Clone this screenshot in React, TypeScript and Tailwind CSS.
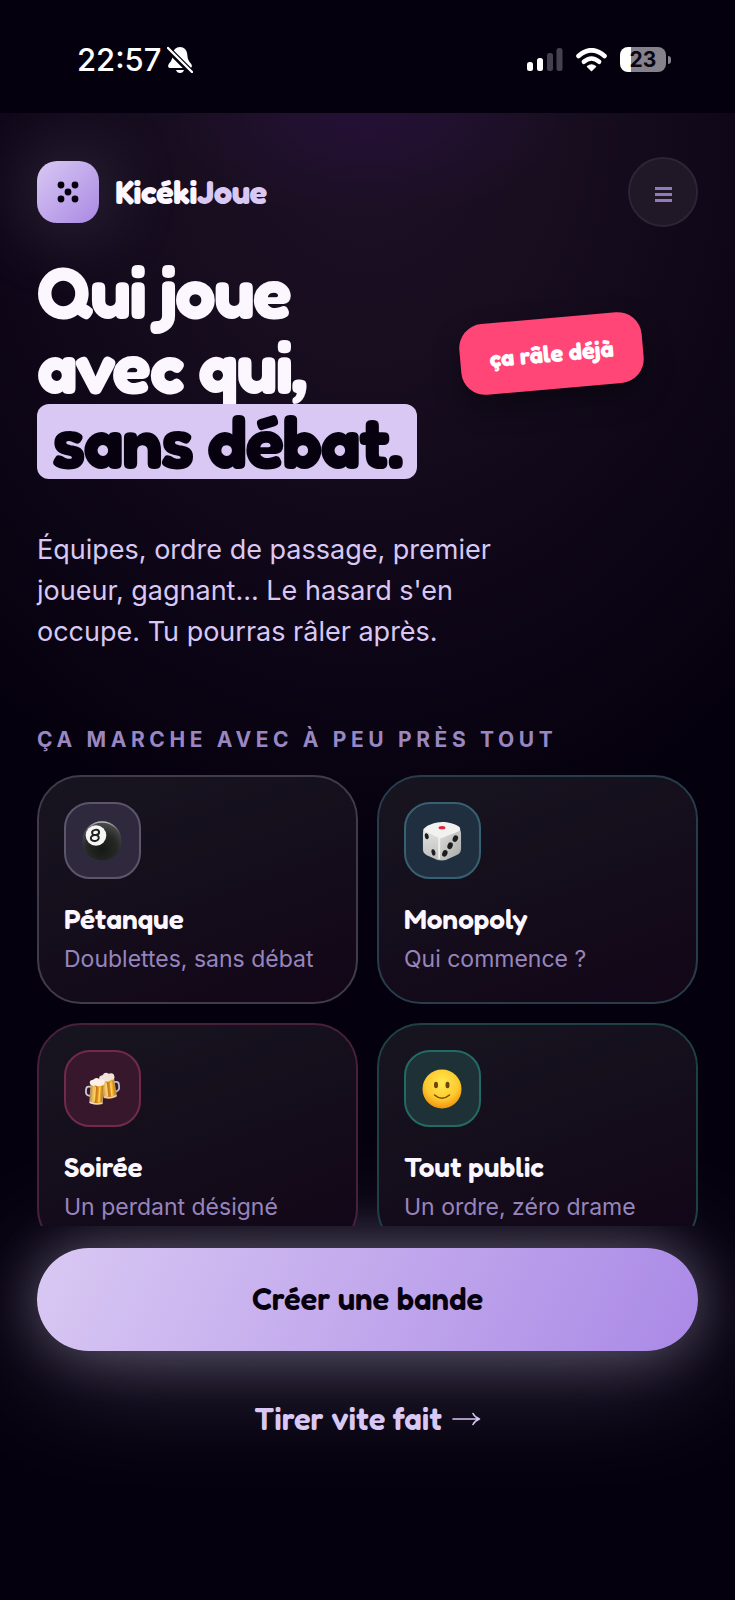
import { useState } from 'react';
import type { ReactNode } from 'react';
import clsx from 'clsx';

type Univers = {
    id: string;
    titre: string;
    detail: string;
    icone: ReactNode;
    carte: string;
    pastille: string;
};

const DISPLAY = "font-['Fredoka','Lato',sans-serif]";

const BilleIcon = () => (
    <svg viewBox="0 0 40 40" className="w-10 h-10" aria-hidden="true">
        <defs>
            <radialGradient id="bille" cx="0.5" cy="0.7" r="0.65">
                <stop offset="0" stopColor="#161816" />
                <stop offset="0.6" stopColor="#262826" />
                <stop offset="1" stopColor="#4a4b4c" />
            </radialGradient>
            <linearGradient id="reflet" x1="0" y1="0" x2="0" y2="1">
                <stop offset="0" stopColor="#b8b8bf" />
                <stop offset="0.4" stopColor="#45464a" stopOpacity="0" />
            </linearGradient>
        </defs>
        <circle cx="20" cy="20" r="19.5" fill="url(#bille)" />
        <circle cx="20" cy="20" r="19" fill="none" stroke="url(#reflet)" strokeWidth="1.4" />
        <circle cx="14" cy="14.5" r="10.3" fill="#f5f5f5" />
        <ellipse cx="13.6" cy="11.4" rx="3.5" ry="2.6" fill="none" stroke="#222" strokeWidth="2" transform="rotate(-12 13.6 11.4)" />
        <ellipse cx="12.8" cy="17" rx="4" ry="3" fill="none" stroke="#222" strokeWidth="2" transform="rotate(-12 12.8 17)" />
    </svg>
);

const DeIcon = () => (
    <svg viewBox="0 0 42 42" className="w-10 h-10" aria-hidden="true">
        <defs>
            <linearGradient id="deGauche" x1="0" y1="0" x2="0" y2="1">
                <stop offset="0" stopColor="#e4e4e3" />
                <stop offset="1" stopColor="#bebebc" />
            </linearGradient>
            <linearGradient id="deDroite" x1="0" y1="0" x2="1" y2="1">
                <stop offset="0" stopColor="#dededc" />
                <stop offset="1" stopColor="#a9a9a7" />
            </linearGradient>
        </defs>
        <path d="M2 8Q1 10 1 14v15c0 4 1 5 4 7l9 4q3 2 6 1V16Z" fill="url(#deGauche)" />
        <path d="M40 9q1 2 1 5v15c0 4-2 6-5 7l-11 5q-4 1-7 0V17Z" fill="url(#deDroite)" />
        <path d="M3 7c3-3 12-6 18-6s14 2 18 5c2 2 1 4-1 5l-15 6q-4 2-7 0L4 11C1 10 1 9 3 7Z" fill="#f1f1f0" />
        <path d="M18 18v21" stroke="#eeeeed" strokeWidth="2" strokeLinecap="round" />
        <ellipse cx="21" cy="7" rx="3.6" ry="1.7" fill="#e3203f" />
        <g fill="#1d1d1f">
            <ellipse cx="5" cy="16" rx="2" ry="3.2" transform="rotate(-12 5 16)" />
            <ellipse cx="12" cy="33" rx="2" ry="3.4" transform="rotate(-12 12 33)" />
            <ellipse cx="35" cy="18.5" rx="2.7" ry="3.6" transform="rotate(22 35 18.5)" />
            <ellipse cx="29.5" cy="26" rx="2.7" ry="3.6" transform="rotate(22 29.5 26)" />
            <ellipse cx="24" cy="34" rx="2.7" ry="3.6" transform="rotate(22 24 34)" />
        </g>
    </svg>
);

const ChopesIcon = () => (
    <svg viewBox="0 0 40 40" className="w-9 h-9" aria-hidden="true">
        <defs>
            <linearGradient id="biere" x1="0" y1="0" x2="1" y2="0">
                <stop offset="0" stopColor="#c18a3e" />
                <stop offset="0.25" stopColor="#f2c76a" />
                <stop offset="0.45" stopColor="#c9741a" />
                <stop offset="0.75" stopColor="#f6b521" />
                <stop offset="1" stopColor="#a96d24" />
            </linearGradient>
        </defs>
        <g transform="rotate(-6 28 18)">
            <path d="M33 13h3q3 0 3 3v3q0 4-5 5" fill="none" stroke="#b9bcc6" strokeWidth="2" />
            <path d="M20 9h14l1 20q-7 3-14 0Z" fill="url(#biere)" stroke="#cfa878" strokeWidth="0.8" />
            <path d="M25 13v15M30 13v15" stroke="#fbd56a" strokeWidth="1.5" />
            <path d="M21 28q7 3 14 0" stroke="#ddd2cc" strokeWidth="1.5" fill="none" />
            <path d="M18 9q-1-5 4-5 3-4 7-1 6-1 6 4 0 4-4 3-3 3-6 1-5 2-7-2Z" fill="#f0e4da" />
        </g>
        <g transform="rotate(4 14 26)">
            <path d="M8 18H5q-3 0-3 3v3q0 4 5 4" fill="none" stroke="#c7cad2" strokeWidth="2" />
            <path d="M7 14h14v22q-7 2-14 0Z" fill="url(#biere)" stroke="#cfa878" strokeWidth="0.8" />
            <path d="M12 18v16M17 18v16" stroke="#ffd45e" strokeWidth="1.5" />
            <path d="M7 35q7 3 14 0" stroke="#eadfda" strokeWidth="1.6" fill="none" />
            <path d="M6 15q-2-4 3-5 3-4 7-1 6-1 6 3 0 4-4 4-3 2-6 0-4 2-6-1Z" fill="#fbf0e8" />
        </g>
    </svg>
);

const SourireIcon = () => (
    <svg viewBox="0 0 40 40" className="w-10 h-10" aria-hidden="true">
        <defs>
            <radialGradient id="visage" cx="0.5" cy="0.35" r="0.65">
                <stop offset="0" stopColor="#ffe94f" />
                <stop offset="0.65" stopColor="#fdc92e" />
                <stop offset="1" stopColor="#f1930f" />
            </radialGradient>
        </defs>
        <circle cx="20" cy="20" r="19.5" fill="url(#visage)" />
        <ellipse cx="14" cy="16" rx="2" ry="3.2" fill="#6f4309" />
        <ellipse cx="25.5" cy="16" rx="2" ry="3.2" fill="#6f4309" />
        <path d="M12.5 26q7.5 6.5 15 0" fill="none" stroke="#7c490a" strokeWidth="1.5" strokeLinecap="round" />
    </svg>
);

const univers: Univers[] = [
    {
        id: 'petanque',
        titre: 'Pétanque',
        detail: 'Doublettes, sans débat',
        icone: <BilleIcon />,
        carte: 'border-[#403a4b]',
        pastille: 'bg-[#2e293c] border-[#5c556b]',
    },
    {
        id: 'monopoly',
        titre: 'Monopoly',
        detail: 'Qui commence ?',
        icone: <DeIcon />,
        carte: 'border-[#283c4c]',
        pastille: 'bg-[#202f3f] border-[#356173]',
    },
    {
        id: 'soiree',
        titre: 'Soirée',
        detail: 'Un perdant désigné',
        icone: <ChopesIcon />,
        carte: 'border-[#49203b]',
        pastille: 'bg-[#37172c] border-[#722a4c]',
    },
    {
        id: 'public',
        titre: 'Tout public',
        detail: 'Un ordre, zéro drame',
        icone: <SourireIcon />,
        carte: 'border-[#1f4145]',
        pastille: 'bg-[#1d3137] border-[#226a65]',
    },
];

const StatusBar = () => (
    <div className="h-[113px] shrink-0 flex items-center justify-between pt-1.5 pl-[77px] pr-[64px] bg-[#05000e] text-white">
        <div className="flex items-center gap-1.5">
            <span className="text-[31px] leading-none font-medium">22:57</span>
            <svg viewBox="0 0 26 27" className="w-[26px] h-[27px]" aria-label="Silencieux">
                <path d="M13 1C9 1 6 4 5.700 8.500 5.400 15 3 16 1.500 18.500.500 20.500 1.500 22 3 22h20c1.500 0 2.500-1.500 1.500-3.500C23 16 20.600 15 20.300 8.500 20 4 17 1 13 1Z" fill="currentColor" />
                <path d="M9 24h8q-1 3-4 3t-4-3Z" fill="currentColor" />
                <path d="M0 2 25 27" stroke="#05000e" strokeWidth="6" />
                <path d="m1 2 24 24" stroke="currentColor" strokeWidth="2.4" strokeLinecap="round" />
            </svg>
        </div>
        <div className="flex items-center gap-[13px]">
            <svg viewBox="0 0 36 24" className="w-9 h-6" aria-label="Réseau">
                <rect x="0" y="14" width="6" height="9" rx="2.5" fill="#fff" />
                <rect x="10" y="10" width="6" height="13" rx="2.5" fill="#fff" />
                <rect x="20" y="5" width="6" height="18" rx="2.5" fill="#45414e" />
                <rect x="29.5" y="0" width="6" height="23" rx="2.5" fill="#45414e" />
            </svg>
            <svg viewBox="0 0 31 24" className="w-[31px] h-6" aria-label="Wi-Fi" fill="none" stroke="#fff">
                <path d="M2.500 8q13-11.500 26 0" strokeWidth="4.6" strokeLinecap="round" />
                <path d="M7.800 13.800q7.700-6.500 15.400 0" strokeWidth="4.4" strokeLinecap="round" />
                <path d="M11.500 18.500q4-3 8 0L15.500 22.500Z" fill="#fff" strokeWidth="1.5" strokeLinejoin="round" />
            </svg>
            <div className="flex items-center gap-0.5">
                <div className="w-[46px] h-[25px] rounded-lg bg-linear-to-r from-white from-24% to-[#85828c] to-24% flex items-center justify-center text-[21px] leading-none font-bold text-[#0a0512]">
                    23
                </div>
                <div className="w-[3px] h-2 rounded-r-full bg-[#85828c]" />
            </div>
        </div>
    </div>
);

const App = () => {
    const [menuOuvert, setMenuOuvert] = useState(false);

    return (
        <div className="h-screen flex flex-col overflow-hidden bg-[#05000e] font-['Inter',sans-serif]">
            <StatusBar />

            <div className="relative flex-1 min-h-0 flex flex-col overflow-hidden bg-[radial-gradient(ellipse_28%_7%_at_50%_0%,#241035_0%,transparent_100%),radial-gradient(ellipse_80%_50%_at_50%_0%,#1e1026_0%,#180e20_30%,#0f0718_65%,#05000e_100%)]">
                <header className="flex items-center justify-between px-[37px] pt-11">
                    <div className="flex items-center gap-4">
                        <div className="w-[62px] h-[62px] rounded-[20px] bg-linear-to-br from-[#d9c8f3] to-[#aa89e3] shadow-[0_0_80px_rgba(217,200,243,0.28)] flex items-center justify-center">
                            <svg viewBox="0 0 22 22" className="w-[22px] h-[22px] text-[#07010f]" fill="currentColor" aria-hidden="true">
                                <circle cx="4" cy="4" r="3.4" />
                                <circle cx="18" cy="4" r="3.4" />
                                <circle cx="11" cy="11" r="3.4" />
                                <circle cx="4" cy="18" r="3.4" />
                                <circle cx="18" cy="18" r="3.4" />
                            </svg>
                        </div>
                        <span className={clsx(DISPLAY, 'text-[33px] leading-none font-bold tracking-[-0.02em] text-[#fcf6ff]')}>
                            Kicéki<span className="text-[#d9c8f3]">Joue</span>
                        </span>
                    </div>
                    <button
                        type="button"
                        aria-label="Menu"
                        aria-expanded={menuOuvert}
                        onClick={() => setMenuOuvert(!menuOuvert)}
                        className="w-[70px] h-[70px] rounded-full border-2 border-[#2d2434] bg-[#201727] flex items-center justify-center"
                    >
                        <span className="flex flex-col gap-[3px] pt-1">
                            <span className="w-[17px] h-[3px] bg-[#8f7cb8]" />
                            <span className="w-[17px] h-[3px] bg-[#8f7cb8]" />
                            <span className="w-[17px] h-[3px] bg-[#8f7cb8]" />
                        </span>
                    </button>
                </header>

                <main className="relative z-10 flex-1 min-h-0 overflow-y-auto [scrollbar-width:none] px-[37px] pt-[27px]">
                    {/* ── Accroche ── */}
                    <div className="flex items-start justify-between">
                        <h1 className={clsx(DISPLAY, 'text-[73px] leading-[75px] font-bold tracking-[-0.03em] text-[#fcf6ff]')}>
                            Qui joue
                            <br />
                            avec qui,
                            <br />
                            <span className="relative block w-fit px-[15px] rounded-xl bg-[#d9c8f3] text-[#07010f]">sans débat.</span>
                        </h1>
                        <div className={clsx(DISPLAY, 'mt-[64px] mr-[55px] px-[29px] h-[71px] flex items-center rounded-3xl -rotate-5 bg-[#ff4677] text-white text-2xl font-bold whitespace-nowrap shadow-[0_12px_28px_rgba(0,0,0,0.4)]')}>
                            ça râle déjà
                        </div>
                    </div>

                    <p className="mt-[50px] max-w-[500px] text-[27px] leading-[41px] text-[#d9c8f3]">
                        Équipes, ordre de passage, premier joueur, gagnant... Le hasard s'en occupe. Tu pourras râler après.
                    </p>

                    {/* ── Univers de jeu ── */}
                    <h2 className="mt-[72px] text-[21px] leading-8 font-bold tracking-[0.22em] uppercase text-[#9a87c2]">
                        Ça marche avec à peu près tout
                    </h2>
                    <div className="mt-[19px] grid grid-cols-2 gap-[19px]">
                        {univers.map((u) => (
                            <article
                                key={u.id}
                                className={clsx('rounded-[44px] border-2 bg-linear-160 from-[#171520] to-[#120617] p-[25px]', u.carte)}
                            >
                                <div className={clsx('w-[77px] h-[77px] pr-0.5 rounded-[26px] border-2 flex items-center justify-center', u.pastille)}>
                                    {u.icone}
                                </div>
                                <h3 className={clsx(DISPLAY, 'mt-[22px] text-[28px] leading-9 font-semibold text-[#fcf6ff]')}>{u.titre}</h3>
                                <p className="mt-1 text-[23px] leading-9 text-[#9685bd]">{u.detail}</p>
                            </article>
                        ))}
                    </div>
                </main>

                <footer className="shrink-0 flex flex-col items-center px-[37px] pt-[22px] pb-[158px]">
                    <button
                        type="button"
                        className={clsx(DISPLAY, 'w-full h-[103px] rounded-full bg-linear-[115deg] from-[#d9c8f3] to-[#aa89e6] shadow-[0_0_56px_rgba(217,208,243,0.32),0_16px_120px_rgba(217,208,243,0.28)] text-[31px] font-semibold text-[#07010f]')}
                    >
                        Créer une bande
                    </button>
                    <a href="#tirage" className={clsx(DISPLAY, 'mt-[45px] flex items-center gap-2.5 text-[31px] leading-[46px] font-semibold text-[#d9c8f3]')}>
                        Tirer vite fait
                        <svg viewBox="0 0 29 16" className="w-[29px] h-4" fill="none" stroke="currentColor" strokeWidth="1.6" strokeLinecap="round" strokeLinejoin="round" aria-hidden="true">
                            <path d="M1 8h26M21 2.500Q23 6.500 27.500 8 23 9.500 21 13.500" />
                        </svg>
                    </a>
                </footer>
            </div>
        </div>
    );
};

export default App;
